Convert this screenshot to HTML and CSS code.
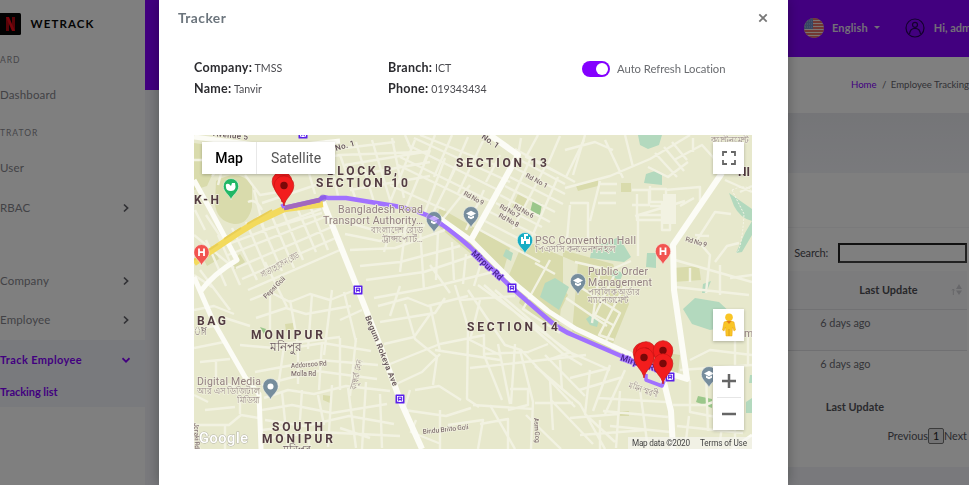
FILE: index.html
```html
<!DOCTYPE html>
<html lang="en">
<head>
<meta charset="utf-8">
<title>WETRACK</title>
<link rel="stylesheet" href="styles.css">
</head>
<body>
<div class="page">
  <aside class="sidebar">
    <div class="brand">
      <svg class="logo" viewBox="0 0 22 22"><rect x="-3" width="24" height="22" rx="1.5" fill="#050505"/><path d="M6 4h3v14H6z M12 4h3v14h-3z" fill="#b00710"/><path d="M6 4h3l6 14h-3z" fill="#f00a18"/></svg>
      <span>WETRACK</span>
    </div>
    <div class="section s1">ARD</div>
    <div class="item">Dashboard</div>
    <div class="section s2">TRATOR</div>
    <div class="item">User</div>
    <div class="item arrow"><span>RBAC</span><svg viewBox="0 0 8 10"><path d="M2 1.5 5.6 5 2 8.5"/></svg></div>
    <div class="item gap arrow"><span>Company</span><svg viewBox="0 0 8 10"><path d="M2 1.5 5.6 5 2 8.5"/></svg></div>
    <div class="item arrow"><span>Employee</span><svg viewBox="0 0 8 10"><path d="M2 1.5 5.6 5 2 8.5"/></svg></div>
    <div class="open">
      <div class="item arrow"><span class="w1">Track Employee</span><svg viewBox="0 0 8 10"><path d="M.5 3.2 4 6.7 7.5 3.2"/></svg></div>
      <div class="sub">Tracking list</div>
    </div>
  </aside>
  <div class="main">
    <header class="topbar">
      <div class="tools">
        <svg class="flag" viewBox="0 0 20 20"><defs><clipPath id="fc"><circle cx="10" cy="10" r="10"/></clipPath></defs><g clip-path="url(#fc)"><path fill="#f7e9e4" d="M0 0h20v20H0z"/><path d="M0 1h20M0 4h20M0 7h20M0 10h20M0 13h20M0 16h20M0 19h20" stroke="#dd4a3e" stroke-width="1.5"/><path fill="#6f8fc9" d="M0 0h9v11H0z"/><path d="M1 3h8M1 6h8M1 9h8" stroke="#b7c8e8" stroke-width=".7" stroke-dasharray="1 1"/></g></svg>
        <span class="lang">English</span><i class="caret"></i>
        <svg class="avatar" viewBox="0 0 20 20"><circle cx="10" cy="10" r="9"/><circle cx="10" cy="6.8" r="2.5"/><path d="M4.5 16c.4-3.8 2.4-5.7 5.5-5.7s5.100 1.900 5.500 5.700"/></svg>
        <span class="hi">Hi, admin</span>
      </div>
    </header>
    <div class="body">
      <div class="gutter"></div>
      <div class="content">
        <div class="crumbs"><div class="trail"><a>Home</a><i>/</i><span>Employee Tracking</span></div></div>
        <div class="band"></div>
        <div class="card">
          <div class="cardhead"></div>
          <div class="search"><span>Search:</span><b></b></div>
          <div class="table">
            <div class="th"><span>Last Update</span><svg viewBox="0 0 12 12"><path d="M2.300 11V5M1 6.500 2.300 5 3.600 6.500" fill="none" stroke="#cfcfd4"/><path d="M5 5 8 0l3 5zM5 6.500h6L8 11z" fill="#cfcfd4"/></svg></div>
            <div class="tr odd"><span>6 days ago</span></div>
            <div class="tr"><span>6 days ago</span></div>
            <div class="tf"><span>Last Update</span></div>
          </div>
          <div class="pager"><span>Previous</span><b>1</b><span>Next</span></div>
        </div>
      </div>
    </div>
  </div>
</div>
<div class="backdrop">
  <div class="modal">
    <div class="mhead"><h5>Tracker</h5><svg viewBox="0 0 10 10"><path d="M1.300 1.300 8.700 8.700M8.700 1.300 1.300 8.700"/></svg></div>
    <div class="info">
      <div><p><b>Company:</b> <span>TMSS</span></p><p><b>Name:</b> <span>Tanvir</span></p></div>
      <div><p><b>Branch:</b> <span>ICT</span></p><p><b>Phone:</b> <span>019343434</span></p></div>
      <div class="auto"><i class="switch"></i><span>Auto Refresh Location</span></div>
    </div>
    <div class="map">
      <svg class="canvas" viewBox="194 135 558 314">
        <defs>
          <g id="pin"><path d="M0 0C-1-8-9.800-12-9.800-20.500a9.800 9.800 0 0 1 19.600 0C9.800-12 1-8 0 0z" fill="#f21d1d" stroke="#c71616" stroke-width=".7"/><circle cy="-20.500" r="3.700" fill="#7a0808"/></g>
          <path id="poi" d="M0 0C-1-5-7.700-7.500-7.700-13.800a7.700 7.700 0 0 1 15.400 0C7.700-7.500 1-5 0 0z" stroke="#f4f4ea" stroke-width=".6"/>
          <g id="cap"><use href="#poi" fill="#768d9d"/><path d="M-5-14.500 0-17.200 5-14.500 0-11.800zM-3-12.500 0-10.900 3-12.500v2.200L0-8.700-3-10.300z" fill="#fff"/></g>
          <g id="bus"><rect x="-4.500" y="-4.500" width="9" height="9" rx=".5" fill="#5a20ea"/><path d="M-3-3h6v6h-6z" fill="#fff"/><path d="M-1.800-2h3.600v3h-3.600zM-2.300 3l1-2M2.300 3l-1-2" fill="#5a20ea" stroke="#5a20ea" stroke-width=".7"/><path d="M-1-1.200h2v1h-2z" fill="#fff"/></g>
          <g id="hosp"><use href="#poi" fill="#f25450"/><path d="M-2.500-17.500v7.500M2.500-17.500v7.500M-2.500-13.800h5" stroke="#fff" stroke-width="1.800"/></g>
        </defs>
        <path fill="#e7e8cc" d="M194 135h558v314H194z"/>
        <g fill="#d9dbac">
          <path d="M194 143l21 3 2 18-10 22-13 4zM216 181q22-13 36 3v23q-4 18-18 17-18-3-19-21zM200 252l12-6 7 13-12 7zM230 262l10-8 5 8-10 7zM440 208l70 40-9 31-68-57zM524 240l-18 42 66 51 6-70zM518 194l12 4-8 14-10-5zM576 186l22-6v6l-20 5zM621 183h10v9h-10zM563 250l50 14 16 40-19 47-51-26 4-34zM672 268l27-2 2 14-28 2zM535 253l-16 50 32 26 17-34zM650 350l30 5-2 20-18-8zM620 411h9v5h-9zM285 324l8-1 1 6-8 2zM323 395l8 1-1 7-7-3z"/>
        </g>
        <g fill="#b3d9be">
          <path d="M638 135h24l-3 10-11 4-8-4zM646 174l9-3 7 3v11l-18-2zM729 193l23 16v12q-12-3-18-15zM752 221v14l-10 17-6 1 9-20zM592 247l15-5 12-5 12 20-7 5-34-4zM647 253h9v15l-10-1zM545 283l10-5 14 9-10 23-19-13zM506 249l7 4-2 8-8-5zM683 309l12-11 24 4 13 12-2 12-20 4-18-6zM586 319l5-4 8 5-2 7-7-2zM613 269l10 4-3 8-9-5zM703 284l8-3-5 12h-4zM746 402l6-4v15h-6zM750 375h2v8h-3z"/>
          <path d="M533 200l9 4-2 11-10-3zM260 327l6 2-2 5zM698 396l14 3v9l-16-6z" fill="#9bc78b"/>
        </g>
        <g class="roads minor">
          <!-- north-west blocks -->
          <path d="M230 140l-12 45M245 175l15 20 30-5M254 190l10 40 58-17M262 203l60-20M273 146l20 40M300 142l15 52M326 140l12 56M194 160h20M280 165l60-10 80-3M340 155l15 42M356 142l18 60M372 140l18 60M392 138l12 60M340 178l90-16M350 190l80-14M345 165l85-14M345 148l50-6M415 140l-25 62M398 165l72 35M390 185l55 25M430 150l-24 58M445 158l-20 54M458 163l-26 52"/>
          <path d="M408 145l90 45M414 138l96 44M420 135l80 32M435 135l-12 30M452 135l-18 42M468 137l-20 46M483 141l-25 52M400 157l90 44M470 185l-28 35M484 190l-18 40M405 135l6 14M500 155l-14 27"/>
          <path d="M520 160l45 24M515 168l50 26M510 177l53 27M505 186l50 26M500 195l50 27M496 203l46 24M490 212l46 23M485 221l46 24M530 160l-28 60M545 167l-32 62M558 177l-28 64M515 149l60 33M521 138l-3 18M538 135l-12 22 40 20 18-37M560 136l-12 28M480 230l60 32"/>
          <!-- west -->
          <path d="M218 235l22 50M232 228l25 52M246 222l20 46M258 216l24 55M270 212l24 56M283 212l20 48M298 210l18 42M310 206l18 44M226 245l95-36M228 255l102-40M236 268l98-42M242 279l96-42M248 290l92-40M200 270l30 40M206 240l20 46M265 262l22 45M194 275l18 12M194 235l40 33"/>
          <path d="M195 210l10 20M206 215l20 30M212 176l22-24 20 8M262 210q-6-12-14-8M194 310l20-4 20 8M194 330l25-5M194 348l30-6M200 362l30-3M205 410l30-3M194 425h35l12-10 18 3M225 425v24M240 392v22M196 440l14-3M194 395l14 7M216 360v18l24 12"/>
          <path d="M250 300l20-8 20 10 20-8 20 6 25-10M256 318l30-10 20 6 45-8M225 318l25 8M270 292v45M290 300l8 45M312 294l-4 55M332 290l-8 65M344 292l12 50M275 345l65-8M240 345l45 4 38-6 48 8M255 372l65-12 58 5M262 385l55-14 60 8M284 346l-6 42M298 346v38M322 342l-3 48M340 338v52M356 338l-6 58M362 310l-22 10"/>
          <path d="M264 398l24-8 26 4 32-8 44 5M262 410l30-5 40 8 55-9M265 420l40 6 44-10 45 8M268 438l50-6 82 4M282 392l6 57M302 390l-2 30M318 395l6 30M332 385l-4 62M348 388l8 60M366 382l-4 67M380 394l2 54M262 430l24-3M309 430v19M340 428l30 10"/>
          <!-- centre -->
          <path d="M340 220l40 12 30-12M345 234l35 7 45-16M350 250l45-2 50-18M360 266l40-4 60-16M366 280l58-8 48-16M374 298l54-10 65-16M394 218l-10 34M406 224l-6 48M420 228l4 62M438 232l-2 48M452 242l2 38M466 254l-3 30M480 266l-6 20M430 265l20 28M400 286l-10 30M378 306l30-8 20 8 40-10M380 322l55-9 10-15"/>
          <path d="M384 344l30-7 17-24M385 366l55-22 45-9M392 386l30-14 18-18M405 304l10 35 22 18-4 28M430 305l10 46M455 285l13 42-1 72 12 8M468 290l37 55 16 5 54 57M480 300l-10 40 30 15M484 285l78 68 20 12M495 290l70 60 45 20M478 285l96 70M460 300l55-4M435 350l65 10M484 335v20l18 45M470 368l46-5 70-8M483 354l46-2M498 344l12 60M515 344l-4 60M520 350l13 52-2 47M510 389h18v16l-20 5M473 405l60 4M528 352l20-8"/>
          <path d="M410 390l-6 20 42 6 25-8M415 390l24-4 22 14M440 410v39M416 420l-5 12 30 12M448 425l35-5-5 29M480 424l28-5v30M490 405l25 44M526 415l35 34M535 403h38M550 380l3 50M535 366l45 38 25 45M545 355l40 41M560 360l2 30M548 360l23-8M551 400l42 44M570 378l40-10M579 390l44-13M590 370l-5 44 30 28M610 365l-17 46M625 370l-20 44M570 418l48-4M580 435l66-5M600 420v29M640 390l8 59M620 391l-4 57M598 398l68 4M603 411l65 6M610 426l60 6"/>
          <!-- east -->
          <path d="M565 188l45-12 40-17 40-24M605 140l18 38M625 135l8 32M565 150l30-8 18 8M585 135l-12 40M648 167l20 10 20-15M655 153l22 24M664 147l20 24M672 142l15 18M674 160l28-15 18 20M693 138v14M600 181l-10 40M600 184h17M600 193h16M598 203h18M570 205l-3 35h18M570 203h18v37M632 190h17v15h-17M650 189h16v17h-16M638 215h32v15h-8v-28h-12v-16M665 220h-28v-26M638 216v40M665 190l35-3v14M680 206l14-8M635 216l50-15M565 238l18 2"/>
          <path d="M697 240l18-28 16 2M697 240l13 15-4 38M695 235l14 1M675 260l77 22M715 262l12-16 12-3M720 265v30M675 287l74 8M730 278l22-3M740 192l12-6M725 180l27 12M575 262l35 8 21-9M600 269l-8 54M614 276l-19 39 18 10M625 285l-26 50 15 5M574 283l46 30-14 28M566 298l41 28M690 268v14M680 370l72-5M690 380v32l52 10M673 405h32l22-8M706 375l2 56M677 426l66 7M686 440l3-24M723 418l-4 31M690 360l20-10 42 5M735 330v119M748 335v30M550 260l-27 49 37 24M535 263l20 11"/>
        </g>
        <path d="M664 194h13v30h-13z" fill="#f2f2e2" transform="translate(-1 0)"/>
        <path d="M732 190q16-7 20 2M732 190l12 24q-2 36-8 39" fill="none" stroke="#f6f5e8" stroke-dasharray="2 1.500"/>
        <g class="roads major">
          <path d="M194 137l85 11 61-7M194 180l16 29 27 51q-24 14-37 32M194 277l20 46 31 54 14 17 2 55" stroke-width="5"/>
          <path d="M323 202l34 85 24 61 19 52 22 49M490 135l28 20-47 85M722 173l-49 72 1 45 13 89-25-8M662 374l9 37 2 38" stroke-width="6"/>
          <path d="M434 214l38 27 42 42 34 28 28 18 86 40" stroke-width="5"/>
          <path d="M752 435l-20 14" stroke-width="3"/>
        </g>
        <path d="M194 263l14-10 12-8 18-12 18-11 28-13 39-5" fill="none" stroke="#f3da5c" stroke-width="6.500"/>
        <path d="M194 260l24-16M224 239l17-11M247 224l25-14" fill="none" stroke="#e9ce55" stroke-width="2"/>
        <path d="M284 208l35-8q4-4 9-2l18 0 49 8q24 4 39 13 18 12 36 28l42 41 31 27q16 15 32 21l67 29" class="route"/>
        <path d="M284 208l36-8" class="shade"/><path d="M284 208l-2-4M646 374v6l16 6 2-5" class="route thin"/>
        <g class="district">
          <text x="327" y="175" textLength="70">BLOCK B,</text><text x="316" y="187" textLength="92">SECTION 10</text>
          <text x="456" y="167" textLength="91">SECTION 13</text><text x="467" y="331" textLength="91">SECTION 14</text>
          <text x="194" y="204" textLength="25">K-H</text><text x="197" y="325" textLength="29">BAG</text>
          <text x="251" y="339" textLength="72">MONIPUR</text><text x="272" y="431" textLength="51">SOUTH</text><text x="262" y="443" textLength="71">MONIPUR</text>
          <text x="738" y="176">NI</text>
        </g>
        <g class="bangla dark"><text x="270" y="351" textLength="32" lengthAdjust="spacingAndGlyphs">মনিপুর</text><text x="194" y="335" textLength="13" lengthAdjust="spacingAndGlyphs">াগ</text><text x="283" y="454" textLength="28" lengthAdjust="spacingAndGlyphs">মনিপুর</text></g>
        <g class="place">
          <text x="338" y="213" textLength="85">Bangladesh Road</text><text x="323" y="224" textLength="100">Transport Authority…</text>
          <text x="535" y="244" textLength="101">PSC Convention Hall</text>
          <text x="588" y="275" textLength="60">Public Order</text><text x="588" y="286" textLength="64">Management</text>
          <text x="197" y="385" textLength="64">Digital Media</text><text x="744" y="337">mi</text>
        </g>
        <g class="bangla"><text x="371" y="233" textLength="52" lengthAdjust="spacingAndGlyphs">বাংলাদেশ রোড</text><text x="382" y="242" textLength="41" lengthAdjust="spacingAndGlyphs">ট্রান্সপোর্ট…</text><text x="535" y="252" textLength="81" lengthAdjust="spacingAndGlyphs">পিএসসি কনভেনশন হল</text><text x="588" y="295" textLength="52" lengthAdjust="spacingAndGlyphs">পাবলিক অর্ডার</text><text x="588" y="303" textLength="41" lengthAdjust="spacingAndGlyphs">ম্যানেজমেন্ট</text><text x="197" y="394" textLength="63" lengthAdjust="spacingAndGlyphs">আর এস ডিজিটাল</text><text x="237" y="403" textLength="23" lengthAdjust="spacingAndGlyphs">মিডিয়া</text><text x="711" y="143" textLength="38" lengthAdjust="spacingAndGlyphs">ক্যান্টনমেন্ট</text><text transform="translate(263 278) rotate(-30)" textLength="43" lengthAdjust="spacingAndGlyphs">সাতাহোসেন রোড</text><text transform="translate(628 388) rotate(18)" textLength="31" lengthAdjust="spacingAndGlyphs">মমিন স্মরণী</text><text transform="translate(356 390) rotate(-78)" textLength="30" lengthAdjust="spacingAndGlyphs">বসুন্ধরা লেন</text></g>
        <g class="street">
          <text transform="translate(213 136) rotate(6)" textLength="35">Avenue 5</text><text transform="translate(336 151) rotate(-16)" textLength="20">No. 1</text><text transform="translate(481 138) rotate(34)" textLength="19">No. 1</text>
          <text transform="translate(365 317) rotate(68)" textLength="75">Begum Rokeya Ave</text><g class="onroute"><text transform="translate(471 254) rotate(43)" textLength="39">Mirpur Rd</text><text transform="translate(620 360) rotate(18)" textLength="40">Mirpur Rd</text></g>
          <g class="small"><text transform="translate(525 177) rotate(28)" textLength="24">Rd No 1</text><text transform="translate(463 195) rotate(28)" textLength="22">Rd No 9</text><text transform="translate(513 208) rotate(28)" textLength="22">Rd No 6</text><text transform="translate(499 208) rotate(28)" textLength="22">Rd No 7</text><text transform="translate(498 217) rotate(28)" textLength="22">Rd No 8</text><text transform="translate(685 241) rotate(16)" textLength="22">Rd No 9</text><text x="291" y="368" transform="rotate(-4 291 368)" textLength="36">Addorsoo Rd</text><text x="291" y="376" textLength="25">Molla Rd</text><text transform="translate(266 299) rotate(-45)" textLength="28">Pepsi Goli</text><text transform="translate(423 434) rotate(-6)" textLength="46">Bindu Britto Goli</text><text transform="translate(534 418) rotate(87)" textLength="25">Asm Gog</text><text transform="translate(194 423) rotate(88)" textLength="26">Jonaki Rd</text></g>
        </g>
        <circle cx="323" cy="198" r="3.500" fill="#7546d0" opacity=".45"/>
        <use href="#bus" x="303" y="134"/><use href="#bus" x="358" y="290"/><use href="#bus" x="400" y="399"/><use href="#bus" x="512" y="288"/><use href="#bus" x="670" y="377"/>
        <use href="#cap" x="434" y="233"/><use href="#cap" x="471" y="228"/><use href="#cap" x="578" y="295"/><use href="#cap" x="709" y="388"/>
        <path d="M427 216l8 3 7 6" class="route" opacity=".6"/>
        <use href="#poi" x="525" y="254" fill="#16adc4"/><path d="M521 244v-7h2v2h1v-5h4v2h-2v3h3v-2h1v7h-4v-3h-2v3z" fill="#fff"/>
        <use href="#poi" x="231" y="200" fill="#20b765"/><path d="M226 187q-1-4 3-3l2 2 1-3h3q2 8-4 8-5 0-5-4z" fill="#fff"/>
        <use href="#poi" x="270.500" y="400" fill="#768d9d"/><circle cx="270.500" cy="386.500" r="3" fill="#fff"/>
        <use href="#hosp" x="201.500" y="266"/><use href="#hosp" x="663" y="265"/>
        <use href="#pin" x="282" y="202"/><use href="#pin" x="284" y="206"/>
        <use href="#pin" x="643" y="373"/><use href="#pin" x="646" y="372"/><use href="#pin" x="663" y="371"/><use href="#pin" x="644" y="378"/><use href="#pin" x="663" y="384"/>
        <path d="M628 437h124v12H628z" fill="#f5f5f0" opacity=".7"/>
        <text x="199" y="443" class="google" textLength="49">Google</text>
        <g class="legal"><text x="632" y="445.500" textLength="58">Map data ©2020</text><text x="700" y="445.500" textLength="47">Terms of Use</text></g>
      </svg>
      <div class="types"><b>Map</b><span>Satellite</span></div>
      <div class="ctrl full"><svg viewBox="0 0 14 14"><path d="M1 5V1h4M9 1h4v4M13 9v4H9M5 13H1V9"/></svg></div>
      <div class="ctrl man"><svg viewBox="0 0 16 24"><circle cx="8" cy="4.200" r="3.800" fill="#f9c526"/><path d="M3 9q5-3 10 0l1.500 8-1.500 1-1.500-4-.5 9H5L4.500 14 3 18l-1.500-1z" fill="#f9c526" stroke="#e8a519" stroke-width=".5"/><path d="M5.500 8h5L8 11z" fill="#e57b1a"/><path d="M7.600 16h.8v7h-.8z" fill="#d89618"/></svg></div>
      <div class="ctrl zoom"><svg viewBox="0 0 14 14"><path d="M0 7h14M7 0v14"/></svg><i></i><svg viewBox="0 0 14 14"><path d="M0 7h14"/></svg></div>
    </div>
  </div>
</div>
</body>
</html>
```
FILE: styles.css
```css
* { box-sizing: border-box; }
body { margin: 0; height: 485px; overflow: hidden; font: 11px/16px Lato, "Open Sans", sans-serif; color: #646c9a; background: #f2f3f8; }
svg { display: block; flex: none; }
i { font-style: normal; }
.page { display: flex; height: 485px; white-space: nowrap; }
.sidebar { width: 144.500px; background: #fff; color: #85858c; }
.brand { display: flex; align-items: center; height: 47px; gap: 8.500px; color: #0a0a0a; font-weight: 700; font-size: 11.5px; letter-spacing: 1.1px; }
.logo { width: 22px; height: 22px; }
.section { font-size: 8.5px; letter-spacing: 1px; color: #8c8c93; }
.s1 { height: 28px; line-height: 27px; }
.s2 { height: 34.500px; line-height: 38px; }
.item { height: 39.300px; display: flex; align-items: center; justify-content: space-between; font-size: 11.5px; letter-spacing: .15px; padding-right: 15px; }
.item svg { width: 8px; height: 10px; fill: none; stroke: #63636a; stroke-width: 1.700; }
.gap { margin-top: 34px; }
.open { background: #f3f5fa; height: 67px; color: #8400ff; font-weight: 700; }
.open .item { font-size: 11px; letter-spacing: .37px; height: 40px; }
.open .item svg { stroke: #8400ff; }
.sub { font-size: 11px; line-height: 24px; letter-spacing: -.05px; }
.main { flex: 1; min-width: 0; display: flex; flex-direction: column; }
.topbar { height: 57px; background: #8400ff; display: flex; justify-content: flex-end; overflow: hidden; }
.tools { width: 165px; display: flex; align-items: center; color: #e4dcf0; font-weight: 700; font-size: 11px; padding-bottom: 1px; }
.flag { width: 20px; height: 20px; margin-right: 8px; }
.lang { width: 37px; letter-spacing: .15px; }
.caret { border: 3px solid transparent; border-top-color: #e4dcf0; border-bottom: 0; margin: 0 25px 2px 6px; }
.avatar { width: 20px; height: 20px; margin-right: 9px; fill: none; stroke: #28005c; stroke-width: 1.200; }
.body { display: flex; flex: 1; }
.gutter { width: 14px; height: 33px; background: #8400ff; }
.content { flex: 1; }
.crumbs { height: 56px; background: #fff; display: flex; justify-content: flex-end; align-items: center; font-size: 9.600px; color: #65656c; overflow: hidden; }
.trail { width: 118px; display: flex; }
.trail a { width: 32px; color: #8400ff; }
.trail i { width: 9px; }
.band { height: 60px; background: linear-gradient(#eaebf0, #f3f4f9); }
.card { height: 294px; background: #fff; color: #6b6b72; }
.cardhead { height: 55px; border-bottom: 1px solid #f4f4f6; }
.search { height: 43px; display: flex; align-items: center; justify-content: flex-end; padding: 6px 2px 0 0; gap: 10px; color: #4c4c52; }
.search span { letter-spacing: -.2px; }
.search b { width: 129px; height: 20px; border: 2px solid #444; border-top-color: #222; border-left-color: #222; }
.table { width: 808px; }
.th { height: 39px; background: #f9f9fb; display: flex; align-items: center; justify-content: flex-end; gap: 33px; font-weight: 700; font-size: 10.900px; color: #4f4f55; padding-right: 4px; border-bottom: 1px solid #e3e3e6; }
.th svg { width: 12px; height: 12px; }
.tr { height: 41px; padding: 5px 96px 0 0; text-align: right; font-size: 10.900px; letter-spacing: -.05px; }
.odd { background: #f8f8fa; border-bottom: 1px solid #e0e0e4; }
.tr + .tf { padding-top: 7px; }
.tf { text-align: right; padding: 0 82.500px 0 0; font-weight: 700; font-size: 10.900px; color: #55555c; }
.pager { display: flex; justify-content: flex-end; align-items: center; padding: 13px 2px 0 0; color: #55555c; font-size: 10.800px; }
.pager b { font-weight: 400; width: 16px; height: 16px; line-height: 14px; text-align: center; border: 1px solid #777; border-radius: 2px; background: #e6e6e8; color: #222; }
.backdrop { position: fixed; inset: 0; background: rgba(0,0,0,.5); padding-left: 159px; }
.modal { width: 628.500px; height: 485px; background: #fff; box-shadow: 0 0 12px rgba(0,0,0,.3); padding: 0 35px; }
.mhead { height: 36px; margin: 0 -20px 0 -16px; display: flex; align-items: center; justify-content: space-between; }
.mhead h5 { margin: 0; font-size: 13.800px; color: #6c757d; letter-spacing: .45px; }
.mhead svg { width: 10px; height: 10px; margin-right: 5px; fill: none; stroke: #777; stroke-width: 1.800; }
.info { display: grid; grid-template-columns: 194px 194px 1fr; height: 98.500px; padding-top: 21px; }
.info p { margin: 0; height: 21px; line-height: 21px; color: #4b4b50; font-size: 10.600px; }
.info b { font-size: 12.500px; color: #2c2c30; letter-spacing: .28px; }
.auto { display: flex; align-items: center; height: 24px; color: #6a6c70; font-size: 11.300px; letter-spacing: -.07px; }
.switch { width: 28px; height: 16px; border-radius: 8px; background: #8400ff; margin-right: 7px; padding: 2px; }
.switch::after { content: ""; display: block; width: 12px; height: 12px; margin-left: 12px; border-radius: 50%; background: #fff; }
.map { position: relative; width: 558px; height: 314px; font-family: Roboto, sans-serif; }
.canvas { width: 558px; height: 314px; font-family: Roboto, "Noto Sans", sans-serif; }
.roads { fill: none; stroke-linejoin: round; }
.minor { stroke: #f2f2e2; stroke-width: 2.400; }
.major { stroke: #fcfcf6; }
.route { fill: none; stroke: #a171ff; stroke-width: 4.500; stroke-linejoin: round; }
.shade { fill: none; stroke: #a268bd; stroke-width: 4.500; }
.thin { stroke-width: 3.500; }
.canvas text { paint-order: stroke; stroke: #f0f0de; stroke-width: 1.500px; }
.district { font-size: 12px; font-weight: 700; fill: #533c42; }
.place { font-size: 10.500px; fill: #938080; }
.bangla { font-size: 9px; fill: #978786; }
.bangla.dark { font-size: 12px; fill: #66545a; }
.street { font-size: 8px; font-weight: 500; fill: #615057; }
.canvas .onroute text { fill: #452588; stroke: #a171ff; font-size: 8.500px; }
.small { font-size: 6.800px; fill: #806f70; }
.canvas .google { font-size: 14.500px; font-weight: 500; fill: #fff; stroke: #b5b4a8; stroke-width: 1px; }
.canvas .legal text { font-size: 8.200px; fill: #444; stroke: none; }
.types, .ctrl { position: absolute; background: #fff; box-shadow: 0 1px 3px rgba(0,0,0,.25); }
.types { left: 8px; top: 7px; width: 133px; height: 32px; display: flex; font-size: 14px; line-height: 32px; text-align: center; }
.types b { width: 55px; color: #000; font-weight: 500; border-right: 1px solid #e8e8e8; }
.types span { flex: 1; color: #565656; }
.ctrl { right: 8px; width: 31px; display: flex; flex-direction: column; align-items: center; justify-content: center; }
.ctrl svg { width: 14px; height: 14px; fill: none; stroke: #666; stroke-width: 2.500; }
.full { top: 7px; height: 32px; }
.ctrl.full svg { stroke-width: 1.800; }
.man { top: 174px; height: 32px; }
.ctrl.man svg { width: 16px; height: 24px; stroke: none; }
.zoom { top: 231px; height: 64px; gap: 9px; }
.zoom i { width: 24px; height: 1px; background: #e6e6e6; }
```
